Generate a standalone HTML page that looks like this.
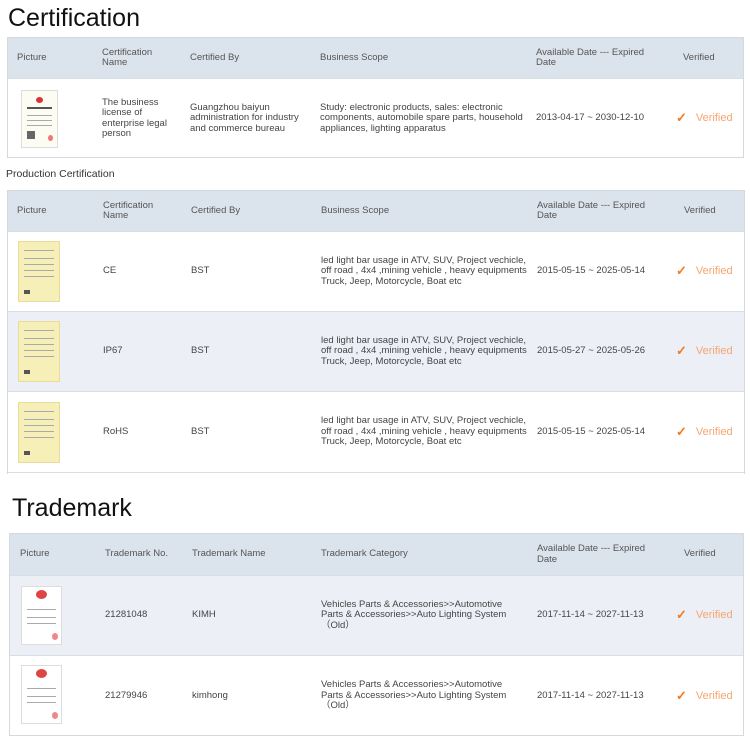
<!DOCTYPE html>
<html><head><meta charset="utf-8"><style>
*{margin:0;padding:0;box-sizing:border-box}
body{width:750px;height:750px;background:#fff;font-family:"Liberation Sans",Arial,sans-serif;color:#444;position:relative;overflow:hidden}
.t{position:absolute;font-size:25px;color:#111}
.tb{position:absolute;border:1px solid #d4d9e0}
.r{position:absolute;left:0;right:0;border-bottom:1px solid #d8dee6}
.h{background:#dbe3ed;color:#555}
.c{position:absolute;top:0;bottom:0;display:flex;align-items:center;font-size:9.5px;line-height:10.5px}
.alt{background:#ecf0f6}
.v{color:#f6a470;font-size:11px}
.ck{color:#f07c22;font-size:13px;margin-right:9px;font-weight:bold}
.th{position:absolute;width:37px;height:58px;border:1px solid #ddd;background:#fdfcf2}
.y{background:#f7efb8;border-color:#e8dc9a}
.th i{position:absolute;left:5px;right:5px;height:1px;background:#aaa}
.sub{position:absolute;left:6px;top:168px;font-size:10.5px;color:#333}
</style></head><body>
<div class="t" style="left:8px;top:4px">Certification</div>
<div class="tb" style="left:7px;top:37px;width:737px;height:121px">
 <div class="r h" style="top:0;height:41px">
  <div class="c" style="left:9px">Picture</div>
  <div class="c" style="left:94px;width:70px">Certification Name</div>
  <div class="c" style="left:182px">Certified By</div>
  <div class="c" style="left:312px">Business Scope</div>
  <div class="c" style="left:528px;width:115px">Available Date --- Expired Date</div>
  <div class="c" style="left:675px">Verified</div>
 </div>
 <div class="r" style="top:41px;height:79px;border:0">
  <div class="th" style="left:13px;top:11px"><i style="top:6px;left:14px;right:14px;height:6px;background:#d33;border-radius:50%"></i><i style="top:16px;height:2px;background:#555"></i><i style="top:24px"></i><i style="top:29px"></i><i style="top:34px"></i><i style="top:40px;width:8px;height:8px;background:#666"></i><i style="top:44px;left:26px;right:4px;height:6px;background:#e77;border-radius:50%"></i></div>
  <div class="c" style="left:94px;width:80px">The business license of enterprise legal person</div>
  <div class="c" style="left:182px;width:120px">Guangzhou baiyun administration for industry and commerce bureau</div>
  <div class="c" style="left:312px;width:205px">Study: electronic products, sales: electronic components, automobile spare parts, household appliances, lighting apparatus</div>
  <div class="c" style="left:528px">2013-04-17 ~ 2030-12-10</div>
  <div class="c" style="left:668px"><span class="ck">✓</span><span class="v">Verified</span></div>
 </div>
</div>
<div class="sub">Production Certification</div>
<div class="tb" style="left:7px;top:190px;width:738px;height:284px;border-bottom:0">
 <div class="r h" style="top:0;height:41px">
  <div class="c" style="left:9px">Picture</div>
  <div class="c" style="left:95px;width:70px">Certification Name</div>
  <div class="c" style="left:183px">Certified By</div>
  <div class="c" style="left:313px">Business Scope</div>
  <div class="c" style="left:529px;width:115px">Available Date --- Expired Date</div>
  <div class="c" style="left:676px">Verified</div>
 </div>
 <div class="r" style="top:41px;height:80px">
  <div class="th y" style="left:10px;top:9px;height:61px;width:42px"><i style="top:8px"></i><i style="top:16px"></i><i style="top:22px"></i><i style="top:28px"></i><i style="top:34px"></i><i style="top:48px;width:6px;height:4px;background:#555"></i></div>
  <div class="c" style="left:95px">CE</div><div class="c" style="left:183px">BST</div>
  <div class="c" style="left:313px;width:215px">led light bar usage in ATV, SUV, Project vechicle, off road , 4x4 ,mining vehicle , heavy equipments Truck, Jeep, Motorcycle, Boat etc</div>
  <div class="c" style="left:529px">2015-05-15 ~ 2025-05-14</div>
  <div class="c" style="left:668px"><span class="ck">✓</span><span class="v">Verified</span></div>
 </div>
 <div class="r alt" style="top:121px;height:80px">
  <div class="th y" style="left:10px;top:9px;height:61px;width:42px"><i style="top:8px"></i><i style="top:16px"></i><i style="top:22px"></i><i style="top:28px"></i><i style="top:34px"></i><i style="top:48px;width:6px;height:4px;background:#555"></i></div>
  <div class="c" style="left:95px">IP67</div><div class="c" style="left:183px">BST</div>
  <div class="c" style="left:313px;width:215px">led light bar usage in ATV, SUV, Project vechicle, off road , 4x4 ,mining vehicle , heavy equipments Truck, Jeep, Motorcycle, Boat etc</div>
  <div class="c" style="left:529px">2015-05-27 ~ 2025-05-26</div>
  <div class="c" style="left:668px"><span class="ck">✓</span><span class="v">Verified</span></div>
 </div>
 <div class="r" style="top:201px;height:81px">
  <div class="th y" style="left:10px;top:10px;height:61px;width:42px"><i style="top:8px"></i><i style="top:16px"></i><i style="top:22px"></i><i style="top:28px"></i><i style="top:34px"></i><i style="top:48px;width:6px;height:4px;background:#555"></i></div>
  <div class="c" style="left:95px">RoHS</div><div class="c" style="left:183px">BST</div>
  <div class="c" style="left:313px;width:215px">led light bar usage in ATV, SUV, Project vechicle, off road , 4x4 ,mining vehicle , heavy equipments Truck, Jeep, Motorcycle, Boat etc</div>
  <div class="c" style="left:529px">2015-05-15 ~ 2025-05-14</div>
  <div class="c" style="left:668px"><span class="ck">✓</span><span class="v">Verified</span></div>
 </div>
</div>
<div class="t" style="left:12px;top:494px">Trademark</div>
<div class="tb" style="left:9px;top:533px;width:735px;height:203px">
 <div class="r h" style="top:0;height:42px">
  <div class="c" style="left:10px">Picture</div>
  <div class="c" style="left:95px">Trademark No.</div>
  <div class="c" style="left:182px">Trademark Name</div>
  <div class="c" style="left:311px">Trademark Category</div>
  <div class="c" style="left:527px;width:115px">Available Date --- Expired Date</div>
  <div class="c" style="left:674px">Verified</div>
 </div>
 <div class="r alt" style="top:42px;height:80px">
  <div class="th" style="left:11px;top:10px;width:41px;height:59px;background:#fff"><i style="top:3px;left:14px;right:14px;height:9px;background:#d44;border-radius:50%"></i><i style="top:22px"></i><i style="top:30px"></i><i style="top:36px"></i><i style="top:46px;left:30px;right:3px;height:7px;background:#e88;border-radius:50%"></i></div>
  <div class="c" style="left:95px">21281048</div><div class="c" style="left:182px">KIMH</div>
  <div class="c" style="left:311px;width:200px">Vehicles Parts &amp; Accessories&gt;&gt;Automotive Parts &amp; Accessories&gt;&gt;Auto Lighting System （Old）</div>
  <div class="c" style="left:527px">2017-11-14 ~ 2027-11-13</div>
  <div class="c" style="left:666px"><span class="ck">✓</span><span class="v">Verified</span></div>
 </div>
 <div class="r" style="top:122px;height:80px;border:0">
  <div class="th" style="left:11px;top:9px;width:41px;height:59px;background:#fff"><i style="top:3px;left:14px;right:14px;height:9px;background:#d44;border-radius:50%"></i><i style="top:22px"></i><i style="top:30px"></i><i style="top:36px"></i><i style="top:46px;left:30px;right:3px;height:7px;background:#e88;border-radius:50%"></i></div>
  <div class="c" style="left:95px">21279946</div><div class="c" style="left:182px">kimhong</div>
  <div class="c" style="left:311px;width:200px">Vehicles Parts &amp; Accessories&gt;&gt;Automotive Parts &amp; Accessories&gt;&gt;Auto Lighting System （Old）</div>
  <div class="c" style="left:527px">2017-11-14 ~ 2027-11-13</div>
  <div class="c" style="left:666px"><span class="ck">✓</span><span class="v">Verified</span></div>
 </div>
</div>
</body></html>
